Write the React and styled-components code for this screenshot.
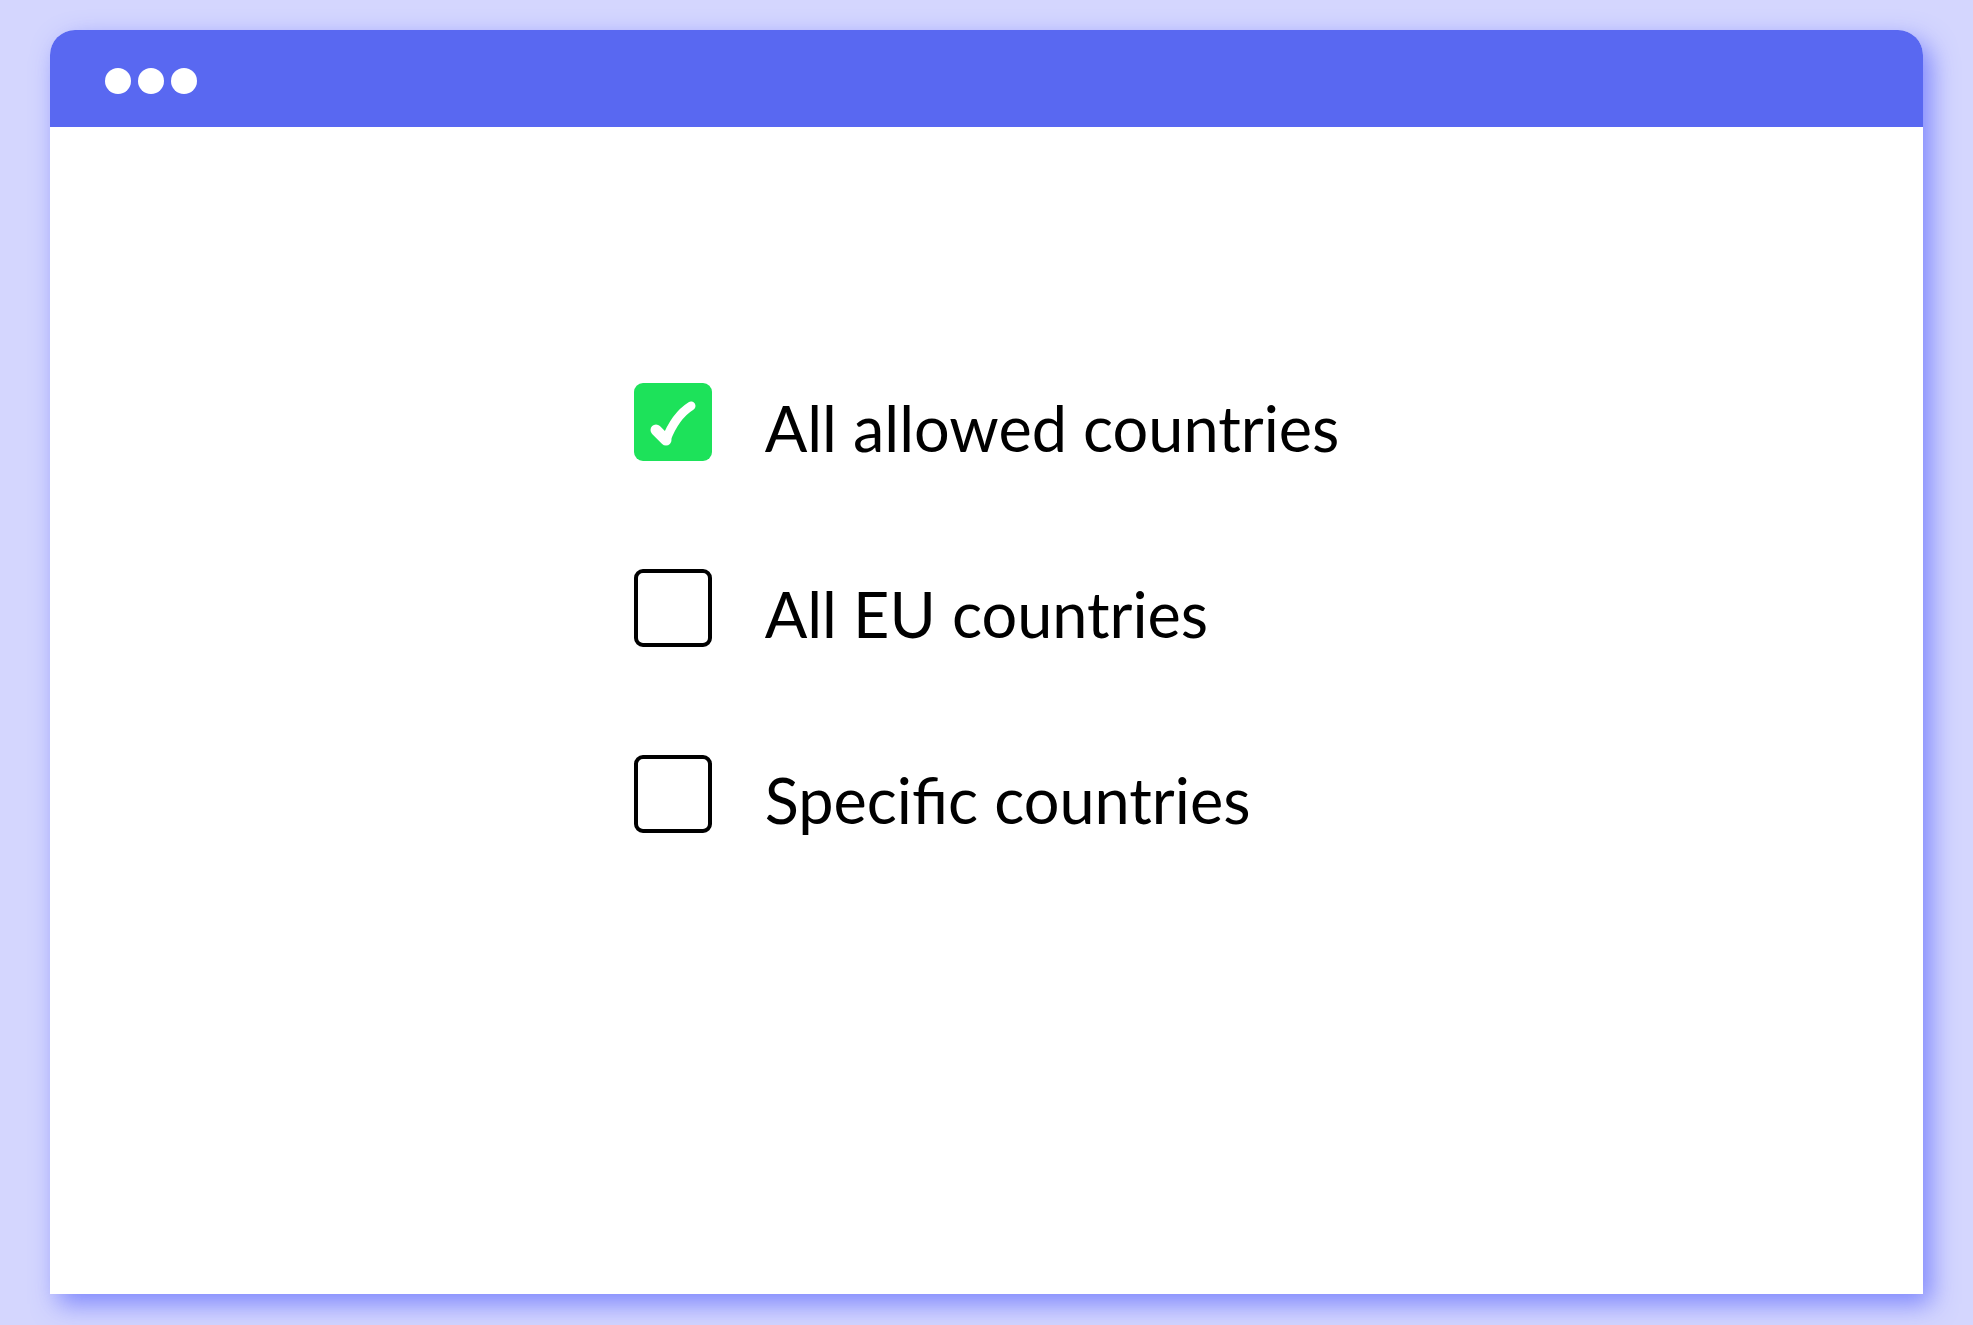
import styled, { createGlobalStyle } from 'styled-components';

const GlobalStyle = createGlobalStyle`
  html, body {
    margin: 0;
    padding: 0;
    background-color: #d4d6fe;
  }
  body {
    font-family: "Lato", "Inter", "Liberation Sans", sans-serif;
  }
`;

const Page = styled.div`
  width: 1973px;
  height: 1325px;
  padding: 30px 50px 31px 50px;
  box-sizing: border-box;
`;

const Window = styled.div`
  width: 1873px;
  height: 1264px;
  display: flex;
  flex-direction: column;
  background-color: #fff;
  border-radius: 25px 25px 0 0;
  box-shadow: 8px 10px 26px rgba(104, 114, 252, 0.8);
`;

const TitleBar = styled.div`
  height: 97px;
  flex-shrink: 0;
  display: flex;
  align-items: center;
  gap: 7px;
  padding: 0 0 0 55px;
  background-color: #5968f1;
  border-radius: 25px 25px 0 0;
`;

const Dot = styled.span`
  width: 26px;
  height: 26px;
  border-radius: 50%;
  background-color: #fff;
  margin-top: 5px;
`;

const Content = styled.div`
  flex: 1;
  display: flex;
  justify-content: center;
  padding-top: 256px;
`;

const OptionList = styled.ul`
  list-style: none;
  margin: 0;
  padding: 0;
  display: flex;
  flex-direction: column;
  align-items: flex-start;
  gap: 108px;
`;

const Option = styled.li`
  display: flex;
  align-items: center;
  gap: 53px;
  height: 78px;
`;

const Box = styled.span`
  width: 78px;
  height: 78px;
  box-sizing: border-box;
  border-radius: 9px;
  display: flex;
  align-items: center;
  justify-content: center;
  background-color: ${(p) => (p.$checked ? '#1de25a' : '#fff')};
  border: ${(p) => (p.$checked ? 'none' : '4px solid #000')};
`;

const Label = styled.span`
  font-size: 63px;
  font-weight: 400;
  color: #000;
  line-height: 1;
  margin-top: 10px;
`;

function CheckMark() {
  return (
    <svg width="78" height="78" viewBox="0 0 78 78">
      <path
        d="M22 47 L32 57"
        stroke="#fff"
        strokeWidth="11"
        strokeLinecap="round"
        fill="none"
      />
      <path
        d="M32 57 Q 41 33 57 23"
        stroke="#fff"
        strokeWidth="9"
        strokeLinecap="round"
        fill="none"
      />
    </svg>
  );
}

const options = [
  { id: 'all', label: 'All allowed countries', checked: true },
  { id: 'eu', label: 'All EU countries', checked: false },
  { id: 'specific', label: 'Specific countries', checked: false },
];

function App() {
  return (
    <>
      <GlobalStyle />
      <Page>
        <Window>
          <TitleBar>
            <Dot />
            <Dot />
            <Dot />
          </TitleBar>
          <Content>
            <OptionList>
              {options.map((opt) => (
                <Option key={opt.id}>
                  <Box $checked={opt.checked}>{opt.checked && <CheckMark />}</Box>
                  <Label>{opt.label}</Label>
                </Option>
              ))}
            </OptionList>
          </Content>
        </Window>
      </Page>
    </>
  );
}

export default App;
